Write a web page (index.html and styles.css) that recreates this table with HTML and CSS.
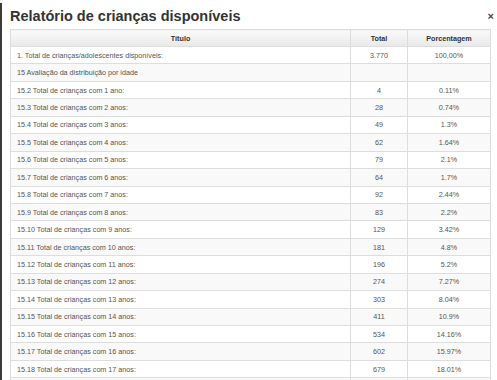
FILE: index.html
```html
<!DOCTYPE html>
<html lang="pt">
<head>
<meta charset="utf-8">
<link rel="stylesheet" href="styles.css">
</head>
<body>
<div class="backdrop">
  <div class="modal">
    <div class="modal-header">
      <h1 class="modal-title">Relatório de crianças disponíveis</h1>
      <span class="close">×</span>
    </div>
    <table class="report">
      <thead>
        <tr><th class="c-title">Título</th><th class="c-total">Total</th><th class="c-pct">Porcentagem</th></tr>
      </thead>
      <tbody>
        <tr><td>1. Total de crianças/adolescentes disponíveis:</td><td class="num">3.770</td><td class="num">100,00%</td></tr>
        <tr><td>15 Avaliação da distribuição por idade</td><td></td><td></td></tr>
        <tr><td>15.2 Total de crianças com 1 ano:</td><td class="num">4</td><td class="num">0.11%</td></tr>
        <tr><td>15.3 Total de crianças com 2 anos:</td><td class="num">28</td><td class="num">0.74%</td></tr>
        <tr><td>15.4 Total de crianças com 3 anos:</td><td class="num">49</td><td class="num">1.3%</td></tr>
        <tr><td>15.5 Total de crianças com 4 anos:</td><td class="num">62</td><td class="num">1.64%</td></tr>
        <tr><td>15.6 Total de crianças com 5 anos:</td><td class="num">79</td><td class="num">2.1%</td></tr>
        <tr><td>15.7 Total de crianças com 6 anos:</td><td class="num">64</td><td class="num">1.7%</td></tr>
        <tr><td>15.8 Total de crianças com 7 anos:</td><td class="num">92</td><td class="num">2.44%</td></tr>
        <tr><td>15.9 Total de crianças com 8 anos:</td><td class="num">83</td><td class="num">2.2%</td></tr>
        <tr><td>15.10 Total de crianças com 9 anos:</td><td class="num">129</td><td class="num">3.42%</td></tr>
        <tr><td>15.11 Total de crianças com 10 anos:</td><td class="num">181</td><td class="num">4.8%</td></tr>
        <tr><td>15.12 Total de crianças com 11 anos:</td><td class="num">196</td><td class="num">5.2%</td></tr>
        <tr><td>15.13 Total de crianças com 12 anos:</td><td class="num">274</td><td class="num">7.27%</td></tr>
        <tr><td>15.14 Total de crianças com 13 anos:</td><td class="num">303</td><td class="num">8.04%</td></tr>
        <tr><td>15.15 Total de crianças com 14 anos:</td><td class="num">411</td><td class="num">10.9%</td></tr>
        <tr><td>15.16 Total de crianças com 15 anos:</td><td class="num">534</td><td class="num">14.16%</td></tr>
        <tr><td>15.17 Total de crianças com 16 anos:</td><td class="num">602</td><td class="num">15.97%</td></tr>
        <tr><td>15.18 Total de crianças com 17 anos:</td><td class="num">679</td><td class="num">18.01%</td></tr>
        <tr><td>15.19 Total de crianças com 18 anos:</td><td class="num">0</td><td class="num">0%</td></tr>
      </tbody>
    </table>
  </div>
</div>
</body>
</html>
```

FILE: styles.css
```css
html, body {
  margin: 0;
  padding: 0;
  background: #fff;
  overflow: hidden;
}
.backdrop {
  height: 380px;
  padding-left: 2px;
  background: linear-gradient(#f4f4f4 0, #f4f4f4 3px, #3a3a3a 3px);
}
.modal {
  background: #fff;
  height: 100%;
  border-top-left-radius: 3px;
  padding: 0 10px 0 8px;
  font-family: "Liberation Sans", Arial, sans-serif;
  color: #333;
}
.modal-header {
  display: flex;
  align-items: flex-start;
  justify-content: space-between;
  height: 29px;
}
.modal-title {
  margin: 0;
  padding-top: 8px;
  font-size: 14.5px;
  line-height: 17px;
  font-weight: bold;
  color: #333;
}
.close {
  font-size: 11px;
  font-weight: bold;
  color: #444;
  margin-top: 11px;
  margin-right: -7px;
  line-height: 10px;
}
.report {
  width: 477px;
  border-collapse: collapse;
  font-size: 7.2px;
  table-layout: fixed;
}
.c-title { width: 339px; }
.c-total { width: 56px; }
.c-pct { width: 82px; }
.report th {
  height: 16px;
  padding: 0;
  font-weight: bold;
  color: #333;
  background: linear-gradient(#fafafa, #e9e9e9);
  border: 1px solid #ddd;
  text-align: center;
}
.report td {
  height: 17.44px;
  box-sizing: border-box;
  padding: 0 6px;
  border: 1px solid #ddd;
  color: #555;
  white-space: nowrap;
}
.report td.num {
  text-align: center;
}
.report tbody tr:nth-child(even) td {
  background: #f9f9f9;
}
```
